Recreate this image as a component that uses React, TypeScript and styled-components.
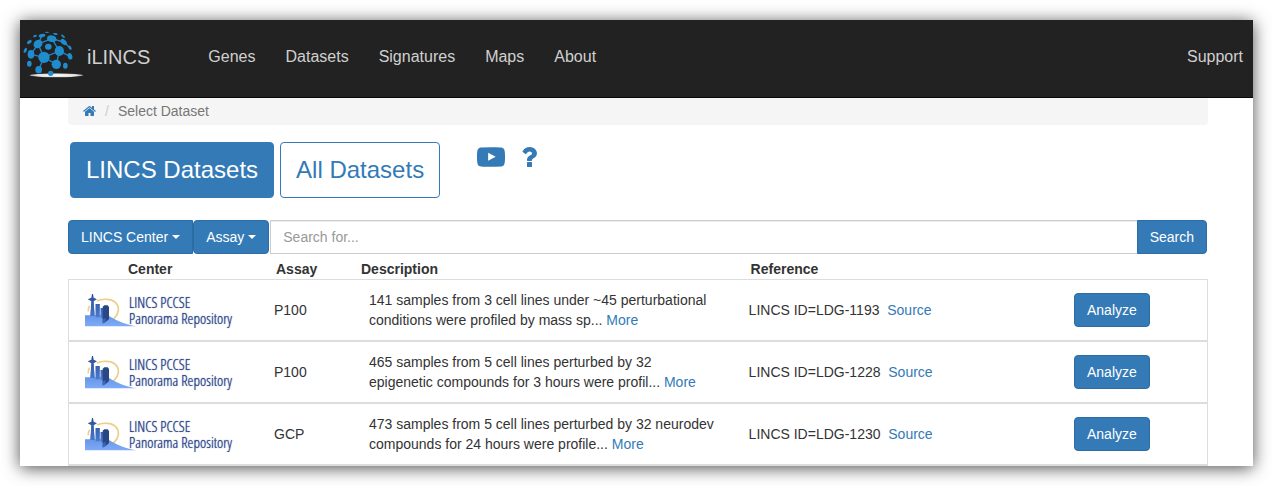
import React from "react";
import styled, { createGlobalStyle } from "styled-components";

const GlobalStyle = createGlobalStyle`
  * { box-sizing: border-box; }
  body {
    margin: 0;
    background: #fff;
    color: #333;
    font: 14px/20px "Liberation Sans", Arial, sans-serif;
  }
`;

const Page = styled.div`
  padding: 20px;
`;

const Frame = styled.div`
  background: #fff;
  box-shadow: 0 2px 16px rgba(0, 0, 0, 0.7);
`;

const Navbar = styled.nav`
  display: flex;
  align-items: center;
  height: 78px;
  padding: 0 10px 4px 3px;
  background: #222;
  border-bottom: 1px solid #080808;
`;

const NavLink = styled.a`
  color: #d0d0d0;
  font-size: 16px;
  text-decoration: none;
`;

const Brand = styled(NavLink)`
  display: flex;
  align-items: center;
  gap: 2px;
  font-size: 20px;

  svg {
    margin-bottom: 4px;
  }
`;

const NavLinks = styled.div`
  display: flex;
  flex: 1;
  gap: 30px;
  margin-left: 58px;
`;

const Content = styled.main`
  padding: 0 45px 0 48px;
`;

const Breadcrumb = styled.ol`
  display: flex;
  align-items: center;
  margin: 0;
  padding: 0 15px 2px;
  height: 27px;
  list-style: none;
  background: #f5f5f5;
  border-radius: 0 0 4px 4px;
  color: #777;
`;

const Crumb = styled.li`
  display: flex;
  align-items: center;

  & + &::before {
    content: "/";
    padding: 0 9px;
    color: #ccc;
  }
`;

const Link = styled.a`
  color: #337ab7;
  text-decoration: none;
`;

const IconLink = styled(Link)`
  display: flex;
`;

const Switcher = styled.div`
  display: flex;
  gap: 6px;
  padding: 17px 2px 22px;
`;

const ScopeButton = styled.button<{ $active?: boolean }>`
  height: 56px;
  padding: 0 15px;
  border: 1px solid #337ab7;
  border-radius: 4px;
  background: ${(p) => (p.$active ? "#337ab7" : "#fff")};
  color: ${(p) => (p.$active ? "#fff" : "#337ab7")};
  font: inherit;
  font-size: 24px;
`;

const HelpLinks = styled.div`
  display: flex;
  gap: 10px;
  margin: 1px 0 0 31px;
`;

const Toolbar = styled.form`
  display: flex;
  height: 34px;
  margin-right: 1px;
`;

const Button = styled.button<{ $radius?: string }>`
  display: inline-flex;
  align-items: center;
  gap: 4px;
  height: 34px;
  padding: 0 12px;
  border: 1px solid #2e6da4;
  border-radius: ${(p) => p.$radius ?? "4px"};
  background: #337ab7;
  color: #fff;
  font: inherit;
  white-space: nowrap;
`;

const Caret = styled.span`
  border: 4px solid transparent;
  border-top-color: #fff;
  border-bottom: 0;
`;

const SearchInput = styled.input`
  flex: 1;
  min-width: 0;
  margin-left: 1px;
  padding: 0 12px;
  border: 1px solid #ccc;
  border-right: 0;
  background: #fff;
  box-shadow: inset 0 1px 1px rgba(0, 0, 0, 0.075);
  color: #555;
  font: inherit;

  &::placeholder {
    color: #999;
  }
`;

const Table = styled.table`
  width: 100%;
  table-layout: fixed;
  border-spacing: 0;
`;

const Column = styled.col<{ $width?: string }>`
  width: ${(p) => p.$width ?? "auto"};
`;

const HeadCell = styled.th<{ $indent?: number }>`
  padding: 5px 0 0 ${(p) => p.$indent ?? 0}px;
  text-align: left;
`;

const Cell = styled.td<{ $inset?: number }>`
  height: 62px;
  padding: 0 24px 0 ${(p) => p.$inset ?? 8}px;
  border: solid #ddd;
  border-width: 1px 0;

  &:first-child {
    border-left-width: 1px;
    padding-right: 0;
  }
  &:last-child {
    border-right-width: 1px;
  }
  tr:last-child > & {
    height: 63px;
    border-bottom-width: 2px;
  }
`;

const CenterBadge = styled.div`
  display: flex;
  align-items: center;
  height: 36px;
`;

const CenterName = styled.span`
  margin-left: -9px;
  color: #2c4488;
  font: 300 15px/16px "Open Sans Condensed Light", "Open Sans Condensed", "Noto Sans", sans-serif;
  text-shadow: 0 0 1px #2c4488;
  white-space: nowrap;
`;

const GlobeLogo = () => {
  const nodes = [
    [87, 97, 17, 17, 0], [133, 78, 14, 15, 0], [110, 41, 14, 10, 10],
    [69, 57, 14, 12, -35], [100, 65, 10, 9, 0], [48, 88, 10, 13, 0],
    [124, 118, 14, 14, 0], [71, 134, 10, 11, 0], [107, 145, 8, 8, 0],
    [43, 116, 7, 9, 0], [151, 122, 7, 9, 0], [165, 94, 7, 10, -15],
    [165, 68, 4, 7, -30], [146, 51, 11, 7, 40], [31, 76, 4, 8, 25],
    [43, 51, 8, 5, -35], [81, 32, 10, 5, -10], [60, 33, 6, 3, -25],
    [96, 22, 6, 2, 0], [121, 27, 7, 3, 10], [144, 34, 7, 3, 40],
  ];
  return (
    <svg width="62" height="48" viewBox="24 18 186 144" aria-hidden="true">
      <defs>
        <radialGradient id="base">
          <stop offset="0" stopColor="#fff" />
          <stop offset="0.8" stopColor="#ddd" />
          <stop offset="1" stopColor="#999" />
        </radialGradient>
      </defs>
      <ellipse cx="124" cy="151" rx="80" ry="6" fill="url(#base)" />
      <path
        d="M87 97L69 57L110 41L133 78L87 97L124 118L133 78L165 94M110 41L146 51M87 97L48 88L69 57M69 57L81 32M87 97L71 134M146 51L165 68"
        fill="none"
        stroke="#2088c8"
        strokeWidth="4"
      />
      {nodes.map(([x, y, rx, ry, turn]) => (
        <ellipse key={`${x}-${y}`} cx={x} cy={y} rx={rx} ry={ry} fill="#1f8ccd" transform={`rotate(${turn} ${x} ${y})`} />
      ))}
    </svg>
  );
};

const SkylineLogo = () => (
  <svg width="53" height="36" viewBox="30 20 159 108" aria-hidden="true">
    <defs>
      <linearGradient id="hill" x1="0" y1="0" x2="0" y2="1">
        <stop offset="0" stopColor="#4a7bd0" />
        <stop offset="1" stopColor="#7eabf8" />
      </linearGradient>
      <linearGradient id="tower" x1="0" y1="0" x2="0" y2="1">
        <stop offset="0" stopColor="#2b4c97" />
        <stop offset="1" stopColor="#4d7dcf" />
      </linearGradient>
    </defs>
    <path d="M66 47C75 42 86 41 97 42C119 43 132 58 130 76C128 92 113 106 96 111M40 78C39 70 41 65 44 61" fill="none" stroke="#edcd88" strokeWidth="5" />
    <path d="M30 90H46L50 48H55L59 90H62V56H74V88H77V68H102V92C125 106 155 119 186 123H30Z" fill="url(#hill)" />
    <path d="M46 92L49 48L38 42L49 37L51 26H54L56 37L66 42L56 48L59 92ZM62 92V56H74V96H62ZM77 97V68H88V100Z" fill="url(#tower)" />
    <path d="M83 104V64L88 60H98L102 65V101C98 106 90 111 83 114Z" fill="#294785" />
    <path d="M83 102L92 98V110L83 115Z" fill="#3d66b4" />
  </svg>
);

const HomeIcon = () => (
  <svg width="13" height="14" viewBox="64 0 1664 1792" fill="currentColor" aria-hidden="true">
    <path d="M1472 992v480q0 26-19 45t-45 19h-384v-384h-256v384h-384q-26 0-45-19t-19-45v-480q0-1 .5-3t.5-3l575-474 575 474q1 2 1 6zm223-69l-62 74q-8 9-21 11h-3q-13 0-21-7l-692-577-692 577q-12 8-24 7-13-2-21-11l-62-74q-8-10-7-23.5t11-21.5l719-599q32-26 76-26t76 26l244 204v-195q0-14 9-23t23-9h192q14 0 23 9t9 23v408l219 182q10 8 11 21.5t-7 23.5z" />
  </svg>
);

const VideoIcon = () => (
  <svg width="28" height="28" viewBox="0 0 1792 1792" fill="currentColor" aria-hidden="true">
    <path d="M711 1128l484-250-484-253v503zm185-862q168 0 324.5 4.5t229.5 9.5l73 4q1 0 17 1.5t23 3 23.5 4.5 28.5 8 28 13 31 19.5 29 26.5q6 6 15.5 18.5t29 58.5 26.5 101q8 64 12.5 136.5t5.5 113.5v176q1 145-18 290-7 55-25 99.5t-32 61.5l-14 17q-14 15-29 26.5t-31 19-28 12.5-28.5 8-24 4.5-23 3-16.5 1.5q-251 19-627 19-207-2-359.5-6.5t-200.5-7.5l-49-4-36-4q-36-5-54.5-10t-51-21-56.5-41q-6-6-15.5-18.5t-29-58.5-26.5-101q-8-64-12.5-136.5t-5.5-113.5v-176q-1-145 18-290 7-55 25-99.5t32-61.5l14-17q14-15 29-26.5t31-19.5 28-13 28.5-8 23.5-4.5 23-3 17-1.5q251-18 627-18z" />
  </svg>
);

const QuestionIcon = () => (
  <svg width="28" height="28" viewBox="0 0 1792 1792" fill="currentColor" aria-hidden="true">
    <path d="M1088 1256v240q0 16-12 28t-28 12h-240q-16 0-28-12t-12-28v-240q0-16 12-28t28-12h240q16 0 28 12t12 28zm316-600q0 54-15.5 101t-35 76.5-55 59.5-57.5 43.5-61 35.5q-41 23-68.5 65t-27.5 67q0 17-12 32.5t-28 15.5h-240q-15 0-25.5-18.5t-10.5-37.5v-45q0-83 65-156.5t143-108.5q59-27 84-56t25-76q0-42-46.5-74t-107.5-32q-65 0-108 29-35 25-107 115-13 16-31 16-12 0-25-8l-164-125q-13-10-15.5-25t5.5-28q160-266 464-266 80 0 161 31t146 83 106 127.5 41 158.5z" />
  </svg>
);

const datasets = [
  {
    id: "LDG-1193",
    assay: "P100",
    description: "141 samples from 3 cell lines under ~45 perturbational conditions were profiled by mass sp...",
  },
  {
    id: "LDG-1228",
    assay: "P100",
    description: "465 samples from 5 cell lines perturbed by 32 epigenetic compounds for 3 hours were profil...",
  },
  {
    id: "LDG-1230",
    assay: "GCP",
    description: "473 samples from 5 cell lines perturbed by 32 neurodev compounds for 24 hours were profile...",
  },
];

export default function App() {
  return (
    <Page>
      <GlobalStyle />
      <Frame>
        <Navbar>
          <Brand href="#">
            <GlobeLogo />
            iLINCS
          </Brand>
          <NavLinks>
            {["Genes", "Datasets", "Signatures", "Maps", "About"].map((name) => (
              <NavLink key={name} href="#">{name}</NavLink>
            ))}
          </NavLinks>
          <NavLink href="#">Support</NavLink>
        </Navbar>
        <Content>
          <Breadcrumb>
            <Crumb>
              <IconLink href="#" aria-label="Home"><HomeIcon /></IconLink>
            </Crumb>
            <Crumb>Select Dataset</Crumb>
          </Breadcrumb>
          <Switcher>
            <ScopeButton type="button" $active>LINCS Datasets</ScopeButton>
            <ScopeButton type="button">All Datasets</ScopeButton>
            <HelpLinks>
              <IconLink href="#" aria-label="Video tutorial"><VideoIcon /></IconLink>
              <IconLink href="#" aria-label="Help"><QuestionIcon /></IconLink>
            </HelpLinks>
          </Switcher>
          <Toolbar>
            <Button type="button" aria-haspopup="menu" $radius="4px 0 0 4px">LINCS Center<Caret /></Button>
            <Button type="button" aria-haspopup="menu">Assay<Caret /></Button>
            <SearchInput type="text" placeholder="Search for..." aria-label="Search datasets" />
            <Button type="submit" $radius="0 4px 4px 0">Search</Button>
          </Toolbar>
          <Table>
            <colgroup>
              <Column $width="198px" />
              <Column $width="87px" />
              <Column $width="34%" />
              <Column />
              <Column $width="142px" />
            </colgroup>
            <thead>
              <tr>
                <HeadCell scope="col" $indent={60}>Center</HeadCell>
                <HeadCell scope="col" $indent={10}>Assay</HeadCell>
                <HeadCell scope="col" $indent={8}>Description</HeadCell>
                <HeadCell scope="col" $indent={10}>Reference</HeadCell>
                <HeadCell as="td" />
              </tr>
            </thead>
            <tbody>
              {datasets.map((row) => (
                <tr key={row.id}>
                  <Cell $inset={16}>
                    <CenterBadge>
                      <SkylineLogo />
                      <CenterName>LINCS PCCSE<br />Panorama Repository</CenterName>
                    </CenterBadge>
                  </Cell>
                  <Cell>{row.assay}</Cell>
                  <Cell $inset={16}>{row.description} <Link href="#">More</Link></Cell>
                  <Cell>LINCS ID={row.id}&nbsp; <Link href="#">Source</Link></Cell>
                  <Cell><Button type="button">Analyze</Button></Cell>
                </tr>
              ))}
            </tbody>
          </Table>
        </Content>
      </Frame>
    </Page>
  );
}
